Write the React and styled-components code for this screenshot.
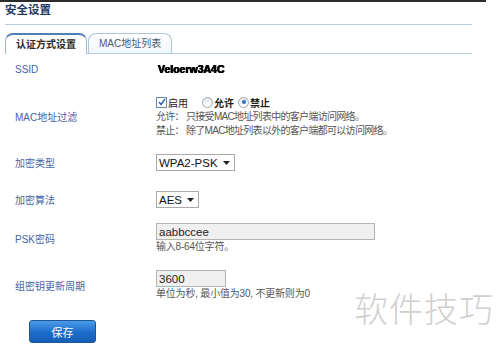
import { createGlobalStyle, styled } from "styled-components";

const GlobalStyle = createGlobalStyle`
  html, body {
    margin: 0;
    padding: 0;
    background: #fff;
  }
  body {
    font-family: "Liberation Sans", "Noto Sans CJK SC", sans-serif;
    font-size: 11px;
    color: #444;
  }
`;

const Page = styled.div`
  position: relative;
  width: 500px;
  height: 346px;
  overflow: hidden;
  &::before {
    content: "";
    display: block;
    width: 486px;
    height: 2px;
    background: #2b2b2b;
  }
`;

const Panel = styled.div`
  width: 467px;
  margin-left: 5px;
`;

const Title = styled.h1`
  margin: 0;
  height: 22px;
  line-height: 17px;
  font-size: 11.5px;
  font-weight: bold;
  color: #1d3b66;
  border-bottom: 1px solid #b9cde2;
`;

const TabBar = styled.div`
  display: flex;
  align-items: flex-end;
  gap: 1px;
  margin-top: 7px;
  height: 21px;
  border-bottom: 1px solid #b9cde2;
`;

const Tab = styled.div`
  height: 19px;
  padding: 0 10px;
  line-height: 20px;
  font-size: 10px;
  border: 1px solid ${(p) => (p.$active ? "#9dbbd8" : "#adc6de")};
  border-top: ${(p) => (p.$active ? "2px solid #4d7fb8" : "1px solid #adc6de")};
  border-bottom: none;
  border-radius: 8px 8px 0 0;
  background: ${(p) =>
    p.$active ? "#fff" : "linear-gradient(#ffffff, #f1f6fb)"};
  color: ${(p) => (p.$active ? "#2c2c2c" : "#4a5a70")};
  font-weight: ${(p) => (p.$active ? "bold" : "normal")};
  margin-bottom: ${(p) => (p.$active ? "-1px" : "0")};
`;

const Form = styled.div`
  display: flex;
  flex-direction: column;
  padding-top: 8px;
  margin-left: 15px;
`;

const Row = styled.div`
  display: grid;
  grid-template-columns: 141px 1fr;
  align-items: center;
  margin-top: ${(p) => p.$gap || 0}px;
`;

const Label = styled.div`
  color: #4465a6;
  font-size: 10px;
`;

const Field = styled.div`
  display: flex;
  flex-direction: column;
  align-items: flex-start;
`;

const SsidValue = styled.div`
  line-height: 14px;
  font-weight: 900;
  font-size: 10.5px;
  color: #000;
  filter: blur(0.6px);
  text-shadow: 0.5px 0 0 #000, -0.5px 0 0 #000;
  padding-left: 2px;
`;

const Options = styled.div`
  display: flex;
  align-items: center;
  height: 14px;
  font-size: 10px;
  color: #222;
`;

const Option = styled.label`
  display: flex;
  align-items: center;
  gap: 1px;
  margin-right: ${(p) => p.$space || 0}px;
  font-weight: ${(p) => (p.$bold ? "bold" : "normal")};
`;

const CheckBox = styled.span`
  display: inline-flex;
  align-items: center;
  justify-content: center;
  width: 9px;
  height: 9px;
  border: 1px solid #6a86aa;
  background: #fff;
`;

const Radio = styled.span`
  display: inline-flex;
  align-items: center;
  justify-content: center;
  width: 9px;
  height: 9px;
  border-radius: 50%;
  border: 1px solid #a0a7b0;
  background: linear-gradient(#e4e6e8, #fff);
  &::after {
    content: "";
    width: 4px;
    height: 4px;
    border-radius: 50%;
    background: ${(p) => (p.$checked ? "#2a6fc9" : "transparent")};
  }
`;

const Note = styled.div`
  line-height: 14px;
  font-size: 10px;
  letter-spacing: -0.7px;
  color: #555;
  margin-top: ${(p) => p.$top || 0}px;
`;

const SelectBox = styled.div`
  display: flex;
  align-items: center;
  gap: 5px;
  height: 15px;
  padding: 0 4px 0 2px;
  border: 1px solid #a9a9a9;
  background: #fff;
  font-size: 11.5px;
  color: #111;
`;

const TextInput = styled.input`
  box-sizing: border-box;
  width: ${(p) => p.$width}px;
  height: 17px;
  padding: 0 2px;
  border: 1px solid #b4b4b4;
  background: #f0f0f0;
  font-family: "Liberation Sans", sans-serif;
  font-size: 11.5px;
  color: #222;
  outline: none;
`;

const Hint = styled.div`
  line-height: 14px;
  font-size: 10px;
  letter-spacing: -0.2px;
  color: #555;
`;

const SaveButton = styled.button`
  width: 67px;
  height: 23px;
  margin: 19px 0 0 14px;
  border: 1px solid #1f5795;
  border-radius: 3px;
  background: linear-gradient(#4c9be8, #1c6cc9 55%, #1560b8);
  color: #fff;
  font-family: "Noto Sans CJK SC", sans-serif;
  font-size: 11px;
  cursor: pointer;
`;

const Watermark = styled.div`
  position: absolute;
  right: 6px;
  top: 283px;
  font-family: "Noto Sans CJK SC", sans-serif;
  font-size: 34px;
  font-weight: 300;
  letter-spacing: 1px;
  color: #d0d0d0;
`;

function Caret() {
  return (
    <svg width="7" height="4" viewBox="0 0 7 4">
      <path d="M0 0h7L3.5 4z" fill="#222" />
    </svg>
  );
}

function Select({ value }) {
  return (
    <SelectBox>
      {value}
      <Caret />
    </SelectBox>
  );
}

export default function App() {
  return (
    <>
      <GlobalStyle />
      <Page>
        <Panel>
          <Title>安全设置</Title>
          <TabBar>
            <Tab $active>认证方式设置</Tab>
            <Tab>MAC地址列表</Tab>
          </TabBar>
        </Panel>
        <Form>
          <Row>
            <Label>SSID</Label>
            <SsidValue>Veloerw3A4C</SsidValue>
          </Row>
          <Row $gap={19}>
            <Label>MAC地址过滤</Label>
            <Field>
              <Options>
                <Option $space={14}>
                  <CheckBox>
                    <svg width="8" height="8" viewBox="0 0 8 8">
                      <path d="M1 4l2 2.5L7 1" fill="none" stroke="#2a5fb0" strokeWidth="1.4" />
                    </svg>
                  </CheckBox>
                  启用
                </Option>
                <Option $space={4} $bold>
                  <Radio />
                  允许
                </Option>
                <Option $bold>
                  <Radio $checked />
                  禁止
                </Option>
              </Options>
              <Note $top={1}>允许： 只接受MAC地址列表中的客户端访问网络。</Note>
              <Note>禁止： 除了MAC地址列表以外的客户端都可以访问网络。</Note>
            </Field>
          </Row>
          <Row $gap={16}>
            <Label>加密类型</Label>
            <Field>
              <Select value="WPA2-PSK" />
            </Field>
          </Row>
          <Row $gap={20}>
            <Label>加密算法</Label>
            <Field>
              <Select value="AES" />
            </Field>
          </Row>
          <Row $gap={15}>
            <Label>PSK密码</Label>
            <Field>
              <TextInput $width={219} value="aabbccee" readOnly />
              <Hint>输入8-64位字符。</Hint>
            </Field>
          </Row>
          <Row $gap={16}>
            <Label>组密钥更新周期</Label>
            <Field>
              <TextInput $width={70} value="3600" readOnly />
              <Hint>单位为秒, 最小值为30, 不更新则为0</Hint>
            </Field>
          </Row>
          <div>
            <SaveButton>保存</SaveButton>
          </div>
        </Form>
        <Watermark>软件技巧</Watermark>
      </Page>
    </>
  );
}
